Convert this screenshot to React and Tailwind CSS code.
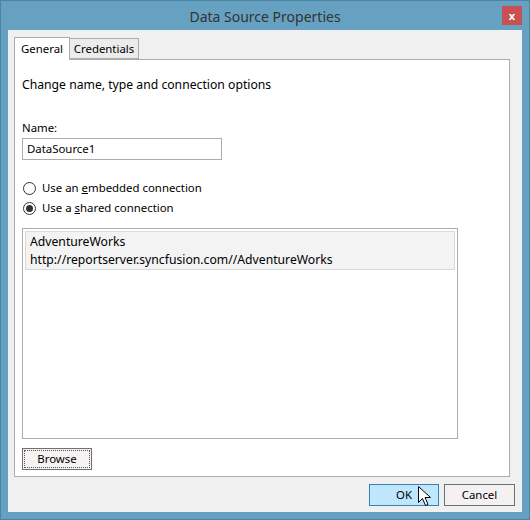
import React from 'react';

const font = { fontFamily: '"Noto Sans", "Open Sans", sans-serif' };

function Radio({ checked }) {
  return (
    <span className="w-[13px] h-[13px] rounded-full border border-[#333] bg-white flex items-center justify-center shrink-0">
      {checked && <span className="w-[7px] h-[7px] rounded-full bg-[#333]" />}
    </span>
  );
}

function Cursor() {
  return (
    <svg className="absolute left-[417px] top-[485px]" width="14" height="22" viewBox="0 0 14 22">
      <path d="M0.5 0.5 L0.5 16.5 L4.5 12.5 L7.5 19.5 L10 18.5 L7 11.5 L12.5 11.5 Z" fill="#fff" stroke="#000" strokeWidth="1" />
    </svg>
  );
}

export default function App() {
  return (
    <div className="relative w-[530px] h-[520px] bg-[#66a1c1] border border-[#4b84a6] flex flex-col text-[11.4px] text-black" style={font}>
      {/* title bar */}
      <div className="h-[29px] flex items-center justify-center relative shrink-0">
        <span className="text-[14px] text-[#333] mt-[1px]">Data Source Properties</span>
        <div className="absolute right-[7px] top-[5px] w-[20px] h-[19px] bg-[#c75050] flex items-center justify-center text-white text-[11px] font-bold leading-none">
          x
        </div>
      </div>

      {/* client area */}
      <div className="mx-[7px] mb-[7px] flex-1 bg-[#f0f0f0] flex flex-col pt-[7px] pl-[6px] pr-[12px]">
        {/* tabs */}
        <div className="flex items-end h-[22px] relative z-10">
          <div className="h-[23px] w-[56px] bg-white border border-[#acacac] border-b-0 flex items-center justify-center -mb-[1px]">
            General
          </div>
          <div className="h-[21px] w-[69px] bg-[#ececec] border border-[#acacac] border-l-0 flex items-center justify-center">
            Credentials
          </div>
        </div>

        {/* panel */}
        <div className="h-[418px] bg-white border border-[#acacac] flex flex-col px-[7px]">
          <div className="mt-[16px] text-[12.2px] leading-[18px]">Change name, type and connection options</div>

          <div className="mt-[26px] leading-[16px]">Name:</div>
          <div className="mt-[2px] w-[200px] h-[22px] border border-[#acacac] flex items-center px-[4px]">
            DataSource1
          </div>

          <div className="mt-[20px] flex items-center gap-[6px] h-[16px] pl-[1px]">
            <Radio />
            <span>Use an <u>e</u>mbedded connection</span>
          </div>
          <div className="mt-[4px] flex items-center gap-[6px] h-[16px] pl-[1px]">
            <Radio checked />
            <span>Use a <u>s</u>hared connection</span>
          </div>

          <div className="mt-[12px] w-[436px] h-[211px] border border-[#acacac] p-[2px]">
            <div className="h-[39px] bg-[#f3f3f3] border border-[#dadada] px-[4px] pt-[1px] leading-[18px] text-[12.2px]">
              <div>AdventureWorks</div>
              <div>http://reportserver.syncfusion.com//AdventureWorks</div>
            </div>
          </div>

          <div className="mt-[9px] w-[70px] h-[22px] border border-[#707070] bg-[#f6f2f2] p-[1px]">
            <div className="w-full h-full border border-dotted border-[#555] flex items-center justify-center">
              Browse
            </div>
          </div>
        </div>

        {/* buttons */}
        <div className="flex justify-end gap-[5px] mt-[7px] -mr-[5px]">
          <div className="w-[70px] h-[22px] bg-[#bee6fd] border border-[#3c7fb1] flex items-center justify-center">
            OK
          </div>
          <div className="w-[71px] h-[22px] bg-[#f3f1f1] border border-[#707070] flex items-center justify-center">
            Cancel
          </div>
        </div>
      </div>
      <Cursor />
    </div>
  );
}
